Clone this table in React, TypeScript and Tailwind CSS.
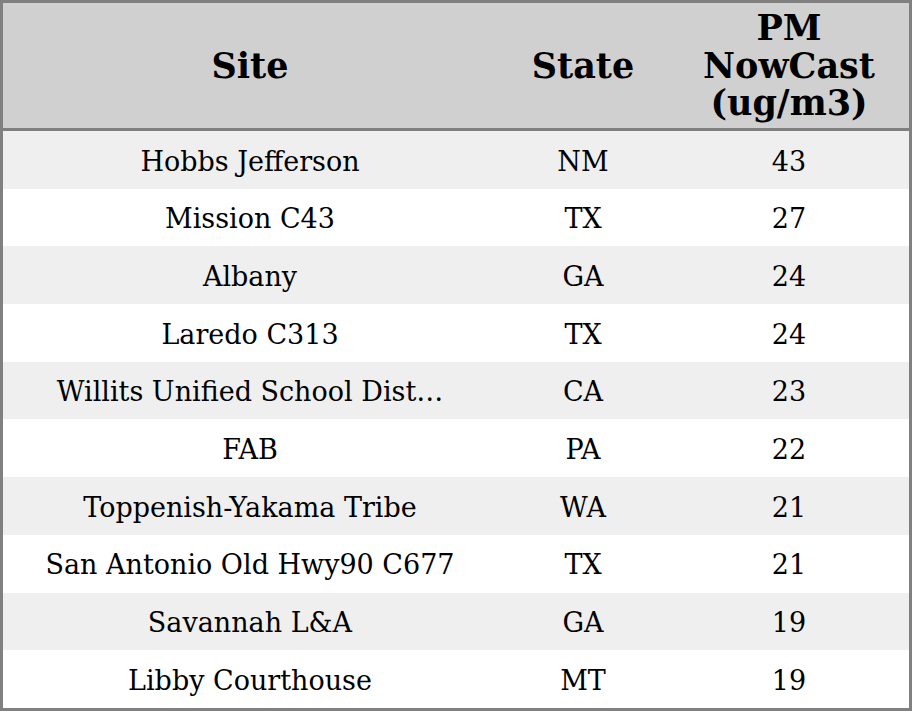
const rows: [string, string, number][] = [
  ['Hobbs Jefferson', 'NM', 43],
  ['Mission C43', 'TX', 27],
  ['Albany', 'GA', 24],
  ['Laredo C313', 'TX', 24],
  ['Willits Unified School Dist…', 'CA', 23],
  ['FAB', 'PA', 22],
  ['Toppenish-Yakama Tribe', 'WA', 21],
  ['San Antonio Old Hwy90 C677', 'TX', 21],
  ['Savannah L&A', 'GA', 19],
  ['Libby Courthouse', 'MT', 19],
];

export default function App() {
  return (
    <div
      className="h-[711px] w-[912px] border-[3px] border-[#808080] bg-white text-black"
      style={{ fontFamily: '"DejaVu Serif", serif' }}
    >
      {/* header */}
      <div className="grid h-[128px] grid-cols-[494px_172px_1fr] items-center border-b-[3px] border-[#808080] bg-[#d0d0d0] text-center text-[35px] font-bold leading-[37.5px]">
        <div>Site</div>
        <div>State</div>
        <div>
          PM
          <br />
          NowCast
          <br />
          (ug/m3)
        </div>
      </div>

      {rows.map(([site, state, pm], i) => (
        <div
          key={site}
          className={`grid h-[57.7px] grid-cols-[494px_172px_1fr] items-center pt-[4px] text-center text-[27px] ${
            i % 2 === 0 ? 'bg-[#efefef]' : 'bg-white'
          }`}
        >
          <div className="truncate px-2">{site}</div>
          <div>{state}</div>
          <div>{pm}</div>
        </div>
      ))}
    </div>
  );
}
